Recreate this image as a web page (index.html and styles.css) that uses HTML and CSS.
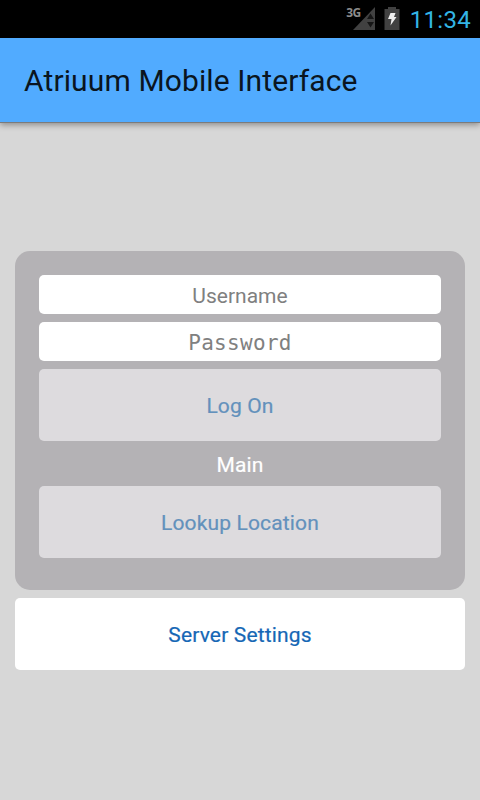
FILE: index.html
```html
<!DOCTYPE html>
<html lang="en">
  <head>
    <meta charset="UTF-8" />
    <meta name="viewport" content="width=device-width, initial-scale=1.0" />
    <title>Atriuum Mobile Interface</title>
    <link rel="stylesheet" href="styles.css" />
  </head>
  <body>
    <div class="status-bar">
      <span class="network">3G</span>
      <svg class="signal" width="22" height="24" viewBox="0 0 22 24">
        <path d="M22 1V24H0Z" fill="#414141" />
        <path d="M14 13l3.500-5.500 3.500 5.500zM14 16h7l-3.500 5.500z" fill="#161616" />
      </svg>
      <svg class="battery" width="16" height="24" viewBox="0 0 16 24">
        <path d="M4 1h8v2h3.500v21H0.500V3H4z" fill="#414141" />
        <path d="M6.500 7h5l-1.500 4h2.500l-6 8.500 1-6.500H4z" fill="#eee" />
      </svg>
      <span class="clock">11:34</span>
    </div>

    <header class="app-bar">
      <h1>Atriuum Mobile Interface</h1>
    </header>

    <main>
      <form class="login-card">
        <input class="field" type="text" placeholder="Username" />
        <input class="field password" type="password" placeholder="Password" />
        <button class="button" type="button" disabled>Log On</button>
        <p class="location">Main</p>
        <button class="button" type="button" disabled>Lookup Location</button>
      </form>
      <button class="button settings" type="button">Server Settings</button>
    </main>
  </body>
</html>
```

FILE: styles.css
```css
* {
  margin: 0;
  padding: 0;
  box-sizing: border-box;
}

body {
  height: 100vh;
  background: #d7d7d7;
  font-family: Roboto, sans-serif;
  overflow: hidden;
}

/* Status bar */
.status-bar {
  display: flex;
  justify-content: flex-end;
  height: 38px;
  padding: 6px 9px 0 0;
  background: #000;
}

.network {
  color: #8c8c8c;
  font: bold 12px/14px "Noto Sans", sans-serif;
  letter-spacing: -0.5px;
  margin-right: -8px;
}

.battery {
  margin: 0 10px 0 9px;
}

.clock {
  color: #33b5e5;
  font-size: 24px;
  line-height: 28px;
  letter-spacing: 0.3px;
}

/* App bar */
.app-bar {
  display: flex;
  align-items: center;
  height: 85px;
  padding-left: 24px;
  border-bottom: 1px solid #7b7b7b;
  background: #51abff;
  box-shadow: 0 2px 6px rgba(0, 0, 0, 0.35);
}

.app-bar h1 {
  font-size: 30px;
  font-weight: 400;
  letter-spacing: 0.12px;
  color: #0a1520;
}

/* Login form */
main {
  padding: 128px 15px 0;
}

.login-card {
  display: flex;
  flex-direction: column;
  gap: 8px;
  height: 339px;
  padding: 24px;
  margin-bottom: 8px;
  border-radius: 15px;
  background: #b4b2b5;
}

.field {
  width: 100%;
  height: 39px;
  padding-top: 2px;
  border: none;
  border-radius: 5px;
  background: #fff;
  text-align: center;
  font-family: Roboto, sans-serif;
  font-size: 21px;
}

.field::placeholder {
  color: #808080;
}

.password {
  font-family: "DejaVu Sans Mono", monospace;
  letter-spacing: 0.3px;
}

.button {
  width: 100%;
  height: 72px;
  padding-top: 2px;
  border: none;
  border-radius: 5px;
  background: #dddbde;
  color: #6391bc;
  font-family: Roboto, sans-serif;
  font-size: 21px;
  font-weight: 400;
  letter-spacing: 0.15px;
  -webkit-text-stroke: 0.2px;
}

.location {
  height: 29px;
  line-height: 32px;
  text-align: center;
  color: #fff;
  font-size: 21px;
  letter-spacing: 0.15px;
  -webkit-text-stroke: 0.2px;
}

.settings {
  background: #fff;
  color: #1667b5;
}
```
